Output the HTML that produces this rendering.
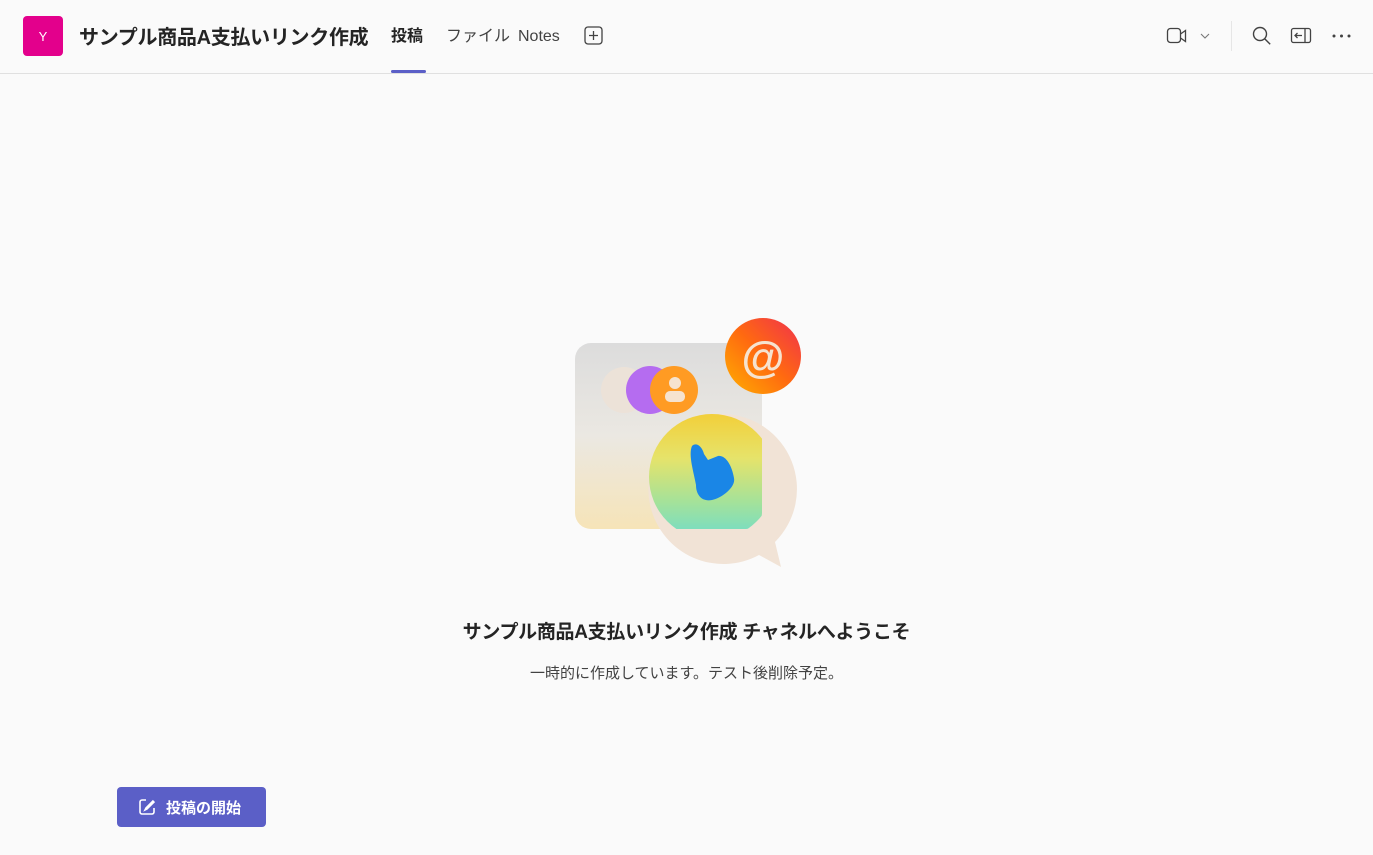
<!DOCTYPE html>
<html><head><meta charset="utf-8"><style>
*{margin:0;padding:0;box-sizing:border-box}
body{width:1373px;height:855px;background:#fafafa;font-family:"Liberation Sans","Noto Sans CJK JP",sans-serif;color:#242424;position:relative;overflow:hidden}
.hdr{position:absolute;left:0;top:0;width:1373px;height:74px;border-bottom:1px solid #e0e0e0;background:#fafafa}
.av{position:absolute;left:23px;top:16px;width:40px;height:40px;border-radius:4px;background:#e3008c;color:#fff;font-size:13px;display:flex;align-items:center;justify-content:center}
.t{position:absolute;top:23px;height:30px;line-height:30px;font-size:20px;font-weight:bold;left:79px;letter-spacing:-0.3px}
.tab{position:absolute;top:25px;height:24px;line-height:24px;font-size:16px;color:#424242}
.ul{position:absolute;left:391px;top:70px;width:35px;height:3px;background:#5b5fc7;border-radius:2px}
h2{position:absolute;top:620px;left:0;width:1373px;text-align:center;font-size:19px;line-height:26px;font-weight:bold;letter-spacing:-0.3px}
p.s{position:absolute;top:663px;line-height:22px;left:0;width:1373px;text-align:center;font-size:15px;color:#424242}
.btn{position:absolute;left:117px;top:787px;width:149px;height:40px;background:#5b5fc7;border-radius:4px;color:#fff;font-weight:bold;font-size:15px;display:flex;align-items:center;padding-left:20px;gap:9px}
</style></head><body>
<div class="hdr">
<div class="av">Y</div>
<div class="t">サンプル商品A支払いリンク作成</div>
<div class="tab" style="left:391px;font-weight:bold;color:#242424">投稿</div>
<div class="tab" style="left:446px">ファイル</div>
<div class="tab" style="left:518px">Notes</div>
<svg style="position:absolute;left:584px;top:26px" width="19" height="19" viewBox="0 0 19 19" fill="none" stroke="#424242" stroke-width="1.3"><rect x="1" y="1" width="17" height="17" rx="3"/><path d="M9.5 5v9M5 9.5h9"/></svg>
<div class="ul"></div>
<svg style="position:absolute;left:1166px;top:26px" width="24" height="20" viewBox="0 0 24 20" fill="none" stroke="#424242" stroke-width="1.3"><rect x="1.5" y="2.5" width="13" height="14" rx="3"/><path d="M14.5 8l5-3.5v11l-5-3.5"/></svg>
<svg style="position:absolute;left:1200px;top:32px" width="10" height="8" viewBox="0 0 10 8" fill="none" stroke="#777" stroke-width="1.1"><path d="M1 2l4 4 4-4"/></svg>
<div style="position:absolute;left:1231px;top:21px;width:1px;height:30px;background:#e6e6e6"></div>
<svg style="position:absolute;left:1251px;top:25px" width="22" height="22" viewBox="0 0 22 22" fill="none" stroke="#424242" stroke-width="1.4"><circle cx="9" cy="9" r="6.5"/><path d="M13.7 13.7l5.5 5.5"/></svg>
<svg style="position:absolute;left:1290px;top:26px" width="22" height="20" viewBox="0 0 22 20" fill="none" stroke="#424242" stroke-width="1.3"><rect x="1.5" y="2.5" width="19" height="14" rx="2"/><path d="M15 3v13M12 9.5H5M7.5 7l-2.5 2.5 2.5 2.5"/></svg>
<svg style="position:absolute;left:1332px;top:34px" width="20" height="4" viewBox="0 0 20 4" fill="#424242"><circle cx="2" cy="2" r="1.5"/><circle cx="9.5" cy="2" r="1.5"/><circle cx="17" cy="2" r="1.5"/></svg>
</div>
<svg style="position:absolute;left:560px;top:310px" width="260" height="270" viewBox="560 310 260 270">
<defs>
<linearGradient id="rg" x1="0" y1="0" x2="0" y2="1"><stop offset="0" stop-color="#dcdcdc"/><stop offset=".5" stop-color="#ebe8e2"/><stop offset="1" stop-color="#f6e4b8"/></linearGradient>
<linearGradient id="gg" x1="0" y1="0" x2="0" y2="1"><stop offset="0" stop-color="#f2cf3a"/><stop offset=".35" stop-color="#e6e36a"/><stop offset=".7" stop-color="#a4e29a"/><stop offset="1" stop-color="#6fdccb"/></linearGradient>
<linearGradient id="og" x1="0" y1="1" x2="1" y2="0"><stop offset="0" stop-color="#ffb000"/><stop offset=".5" stop-color="#ff6a10"/><stop offset="1" stop-color="#f0304f"/></linearGradient>
<clipPath id="cp"><rect x="575" y="343" width="187" height="186" rx="16"/></clipPath>
</defs>
<rect x="575" y="343" width="187" height="186" rx="16" fill="url(#rg)"/>
<path d="M724 414a75 75 0 1 0 35 141l22 12-6-25a75 75 0 0 0-51-128z" fill="#f1e3d6"/>
<circle cx="712" cy="477" r="63" fill="url(#gg)" clip-path="url(#cp)"/>
<path d="M692 446c4-4 10 0 12 8l4 6 10-4c8-1 14 10 16 22 2 9-12 20-22 22-10 2-16-5-16-15-2-12-8-30-4-39z" fill="#1a86e6"/>
<circle cx="624" cy="390" r="23" fill="#ece2d8"/>
<circle cx="650" cy="390" r="24" fill="#b56cf0"/>
<circle cx="674" cy="390" r="24" fill="#ff9b23"/>
<circle cx="675" cy="383" r="6" fill="#f6e3cf"/><rect x="665" y="391" width="20" height="11" rx="5" fill="#f6e3cf"/>
<circle cx="763" cy="356" r="38" fill="url(#og)"/>
<text x="763" y="372" text-anchor="middle" font-size="44" font-weight="bold" fill="#f6e3cf" font-family="Liberation Sans">@</text>
</svg>
<h2>サンプル商品A支払いリンク作成 チャネルへようこそ</h2>
<p class="s">一時的に作成しています。テスト後削除予定。</p>
<div class="btn"><svg width="20" height="20" viewBox="0 0 20 20" fill="none" stroke="#fff" stroke-width="1.6"><path d="M9 3H5a2 2 0 0 0-2 2v10a2 2 0 0 0 2 2h10a2 2 0 0 0 2-2v-4"/><path d="M16.5 3.5L9 11l-1 2 2-1 7.5-7.5"/></svg>投稿の開始</div>
</body></html>
